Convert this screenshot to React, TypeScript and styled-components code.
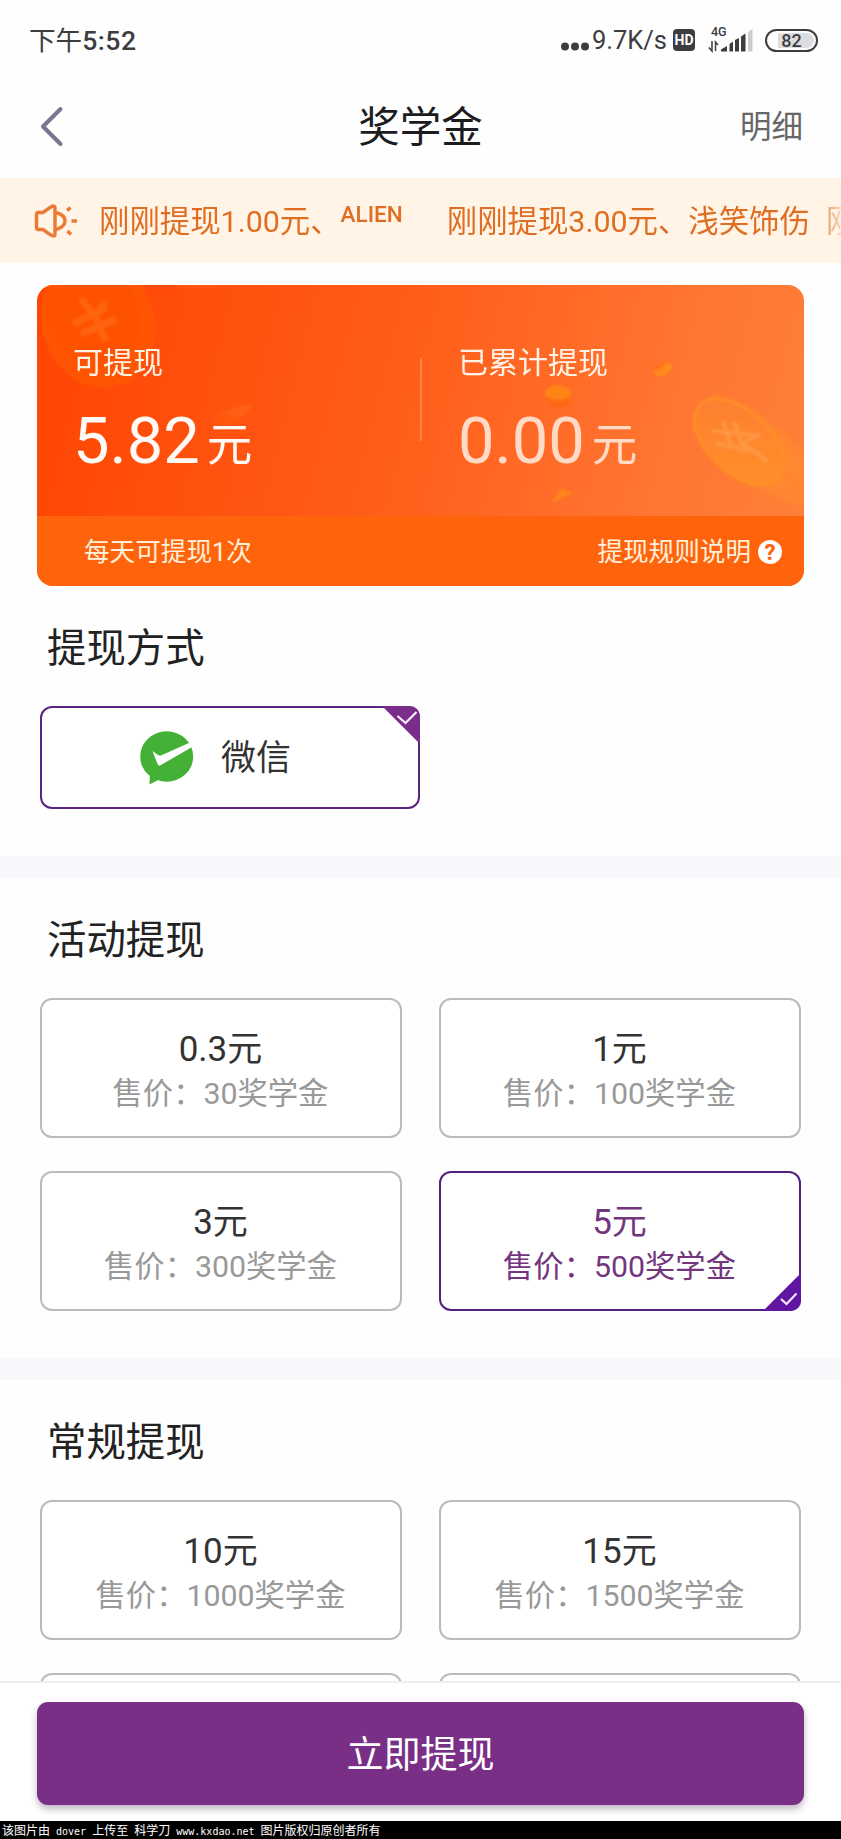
import React from "react";
import styled, { createGlobalStyle } from "styled-components";

const GlobalStyle = createGlobalStyle`
  * { box-sizing: border-box; }
  body {
    margin: 0;
    background: #fefefe;
    font-family: Roboto, "Noto Sans CJK SC", sans-serif;
    color: #222;
  }
`;

const Screen = styled.div`
  display: flex;
  flex-direction: column;
  width: 841px;
  height: 1839px;
  overflow: hidden;
  background: #fefefe;
`;

const StatusBar = styled.header`
  display: flex;
  flex: none;
  align-items: center;
  height: 80px;
  padding: 0 23px 0 29px;
  color: #3d3d3f;
  font-size: 26.6px;
  line-height: 30px;
`;

const Clock = styled.span`
  flex: 1;
  padding-top: 1px;

  b {
    font-weight: 500;
    letter-spacing: 0.5px;
  }
`;

const Speed = styled.span`
  margin-left: 3px;
  font-size: 25.5px;
`;

const HdBadge = styled.span`
  width: 22px;
  height: 22px;
  margin-left: 6px;
  border-radius: 4px;
  background: #3d3d3f;
  color: #fff;
  font-size: 14px;
  font-weight: 700;
  line-height: 23px;
  text-align: center;
`;

const Signal = styled.svg`
  margin: 0 12px 0 13px;
  overflow: visible;
`;

const Battery = styled.span`
  display: flex;
  width: 53px;
  height: 23px;
  padding: 2px 2px 2px 11px;
  border: 2px solid #3d3d3f;
  border-radius: 12px;
`;

const BatteryLevel = styled.span`
  flex: 1;
  padding-right: 9px;
  border-radius: 2px 8px 8px 2px;
  background: #dddde0;
  font-size: 18px;
  font-weight: 500;
  line-height: 16px;
  text-align: center;
`;

const NavBar = styled.nav`
  display: grid;
  flex: none;
  grid-template-columns: 1fr auto 1fr;
  align-items: center;
  height: 98px;
  padding: 0 38px 6px 39px;
`;

const PageTitle = styled.h1`
  margin: 0;
  padding: 3px 1px 0 0;
  color: #1c1c1e;
  font-size: 41.5px;
  font-weight: 400;
  line-height: 50px;
`;

const NavLink = styled.a`
  justify-self: end;
  padding-top: 4px;
  color: #666;
  font-size: 31.5px;
  line-height: 40px;
`;

const Ticker = styled.div`
  display: flex;
  flex: none;
  align-items: center;
  height: 85px;
  padding-left: 34px;
  background: #fff4e6;
  color: #df6e22;
`;

const TickerTrack = styled.div`
  display: flex;
  flex: 1;
  align-items: center;
  margin-left: 15px;
  padding-top: 2px;
  overflow: hidden;
  font-size: 30.4px;
  line-height: 44px;
  white-space: nowrap;
  mask-image: linear-gradient(90deg, #000 714px, transparent 750px);
`;

const TickerItem = styled.span`
  flex: none;
`;

const TickerName = styled.span`
  flex: none;
  margin: 0 44px 15px 0;
  font-size: 22.5px;
  font-weight: 500;
  line-height: 30px;
`;

const TickerNext = styled(TickerItem)`
  margin-left: 16px;
`;

const Scroll = styled.main`
  flex: 1;
  min-height: 0;
  overflow: hidden;
  padding-top: 22px;
`;

const BalanceCard = styled.section`
  position: relative;
  height: 301px;
  margin: 0 37px;
  border-radius: 16px;
  overflow: hidden;
  background: linear-gradient(104deg, #ff4604 4%, #ff5c18 44%, #ff7632 80%, #ff8139 100%);
  color: #fff3e8;
`;

const CardArt = styled.svg`
  position: absolute;
  inset: 0;
`;

const Balances = styled.div`
  position: relative;
  display: flex;
  height: 231px;
  padding: 58px 0 0 36px;
`;

const Balance = styled.div<{ $faded?: boolean }>`
  width: ${(p) => (p.$faded ? "auto" : "347px")};
  padding-left: ${(p) => (p.$faded ? "36px" : "0")};
`;

const BalanceRule = styled.div`
  width: 2px;
  height: 83px;
  margin-top: 15px;
  background: #ff8444;
`;

const BalanceLabel = styled.div`
  font-size: 30px;
  line-height: 40px;
`;

const BalanceValue = styled.div<{ $faded?: boolean }>`
  display: flex;
  align-items: baseline;
  gap: 7px;
  margin-top: 18px;
  color: ${(p) => (p.$faded ? "#ffdac6" : "#fffaf5")};
  font-size: 65px;
  line-height: 80px;

  small {
    font-size: 45.5px;
    line-height: 70px;
    transform: translateY(-2px);
  }
`;

const CardFooter = styled.div`
  position: relative;
  display: flex;
  align-items: center;
  justify-content: space-between;
  height: 70px;
  padding: 1px 22px 0 47px;
  background: #ff640d;
  color: #fff0dc;
  font-size: 25.6px;
  line-height: 34px;
`;

const RulesLink = styled.span`
  display: flex;
  align-items: center;
  gap: 7px;
`;

const HelpDot = styled.span`
  width: 24px;
  height: 24px;
  border-radius: 50%;
  background: #fff;
  color: #ff640d;
  font-size: 22px;
  font-weight: 800;
  line-height: 25px;
  text-align: center;
`;

const Section = styled.section<{ $divided?: boolean }>`
  padding: 0 40px 47px;
  border-top: ${(p) => (p.$divided ? "22px solid #f8f7fc" : "0")};
`;

const SectionTitle = styled.h2`
  margin: 0;
  padding: 34px 0 28px 7px;
  color: #222;
  font-size: 39.4px;
  font-weight: 400;
  line-height: 58px;
`;

const PayMethod = styled.button`
  position: relative;
  display: flex;
  align-items: center;
  width: 380px;
  height: 103px;
  padding: 0 0 0 98px;
  border: 2px solid #5b2382;
  border-radius: 12px;
  background: #fff;
  color: #333;
  font: inherit;
  font-size: 35px;
`;

const PayName = styled.span`
  margin-left: 27px;
  padding-top: 3px;
  line-height: 44px;
`;

const Corner = styled.svg<{ $at: "top" | "bottom" }>`
  position: absolute;
  right: -2px;
  ${(p) => p.$at}: -2px;
  border-radius: ${(p) => (p.$at === "top" ? "0 10px 0 0" : "0 0 10px 0")};
`;

const OptionGrid = styled.div`
  display: grid;
  grid-template-columns: 1fr 1fr;
  gap: 33px 37px;
`;

const OptionCard = styled.button<{ $selected?: boolean }>`
  position: relative;
  height: 140px;
  padding: 7px 1px 0 0;
  border: 2px solid ${(p) => (p.$selected ? "#55207f" : "#bbb")};
  border-radius: 12px;
  background: #fff;
  color: ${(p) => (p.$selected ? "#74357f" : "#999")};
  font: inherit;
  font-size: 30.3px;
  line-height: 44px;
  text-align: center;
`;

const Amount = styled.div<{ $selected?: boolean }>`
  color: ${(p) => (p.$selected ? "inherit" : "#333")};
  font-size: 35px;
`;

const ActionBar = styled.footer`
  flex: none;
  height: 140px;
  padding: 19px 37px 0;
  border-top: 2px solid #f0efe9;
  background: #fff;
`;

const SubmitButton = styled.button`
  display: block;
  width: 100%;
  height: 103px;
  padding: 4px 0 0;
  border: 0;
  border-radius: 11px;
  background: #7a2f87;
  box-shadow: 0 4px 7px rgba(60, 30, 70, 0.32);
  color: #fff;
  font: inherit;
  font-size: 37px;
  line-height: 50px;
`;

const Credit = styled.div`
  flex: none;
  height: 18px;
  padding-left: 2px;
  background: #000;
  color: #fff;
  font-family: "Noto Sans CJK SC", sans-serif;
  font-size: 12px;
  line-height: 18px;
  white-space: pre;

  span {
    font-family: "DejaVu Sans Mono", monospace;
    font-size: 10px;
  }
`;

const BackIcon = () => (
  <svg width="26" height="42" viewBox="0 0 26 42" fill="none" stroke="#77758f" strokeWidth="4" strokeLinecap="round" strokeLinejoin="round">
    <path d="M21.5 4 4 21.5 21.5 39" />
  </svg>
);

const SpeakerIcon = () => (
  <svg width="50" height="36" viewBox="0 0 50 36" fill="none" stroke="#ea7a34" strokeWidth="3.400" strokeLinejoin="round">
    <path d="M4.500 9.500H9L16.500 4.200Q21 1.500 21 5V31Q21 34.500 16.500 31.800L9 26.500H4.500Q2.500 26.500 2.500 24.500V11.500Q2.500 9.500 4.500 9.500Z" />
    <path d="M22 9.500Q31 12 31 18T22 26.500" />
    <path d="M33 7.500 36.500 4.500M37.500 18H43M33.500 28 37 31.500" />
  </svg>
);

const SignalIcon = () => (
  <Signal width="45" height="26" viewBox="0 0 45 26">
    <text x="3" y="9" fill="#3d3d3f" fontFamily="Roboto" fontSize="12.500" fontWeight="500">4G</text>
    <path d="M4 14V24L.8 20.500M7.500 24V15L10 18" fill="none" stroke="#3d3d3f" strokeWidth="1.500" />
    <path d="M13 24V22L19 18.500V24ZM21.500 24V16.500L25 14V24ZM27 24V12.500L31 10.500V24ZM33 24V9L37.500 6V24Z" fill="#3d3d3f" transform="translate(0 .5)" />
    <path d="M40 24.500V5L44.500 2V24.500Z" fill="#ccc" />
  </Signal>
);

const WechatIcon = () => (
  <svg width="54" height="54" viewBox="0 0 54 54">
    <ellipse cx="26.700" cy="25.500" rx="26.500" ry="25.200" fill="#44b035" />
    <path d="M10 42 9.500 53.500 20 48Z" fill="#44b035" />
    <path d="M12.500 20 18.500 24.200Q20 25 22 24L50 11.500 53 15.500 21 34Q18.500 35.500 17.500 33Z" fill="#fff" />
  </svg>
);

const CornerCheck = ({ at }: { at: "top" | "bottom" }) => (
  <Corner $at={at} width="38" height="38" viewBox="0 0 38 38">
    {at === "top" ? (
      <>
        <path d="M0 0H38V38Z" fill="#7b2d8c" />
        <path d="M15.500 10 23.500 17 34.500 6" fill="none" stroke="#fdeeff" strokeWidth="2.200" />
      </>
    ) : (
      <>
        <path d="M0 38H38V0Z" fill="#6016a0" />
        <path d="M18 26 23.500 31 33.500 20.500" fill="none" stroke="#f3e6ff" strokeWidth="2.200" />
      </>
    )}
  </Corner>
);

const CoinArt = () => (
  <CardArt width="767" height="231" viewBox="0 0 767 231" fill="none">
    <defs>
      <linearGradient id="edge" gradientUnits="userSpaceOnUse" x1="680" y1="140" x2="775" y2="200">
        <stop offset="0" stopColor="#ff9a20" stopOpacity=".5" />
        <stop offset="1" stopColor="#ff9428" stopOpacity=".35" />
      </linearGradient>
      <linearGradient id="face" gradientUnits="userSpaceOnUse" x1="665" y1="120" x2="735" y2="195">
        <stop offset="0" stopColor="#ff7e32" />
        <stop offset="1" stopColor="#ff9029" />
      </linearGradient>
      <linearGradient id="leaf" x1="0" y1="1" x2="1" y2="0">
        <stop offset="0" stopColor="#ff6a10" stopOpacity="0" />
        <stop offset="1" stopColor="#ff7018" stopOpacity=".6" />
      </linearGradient>
      <filter id="soft" x="-20%" y="-20%" width="140%" height="140%">
        <feGaussianBlur stdDeviation="3" />
      </filter>
      <filter id="faint" x="-20%" y="-20%" width="140%" height="140%">
        <feGaussianBlur stdDeviation="0.8" />
      </filter>
    </defs>
    <g filter="url(#faint)">
      <ellipse cx="61" cy="38" rx="56" ry="66" transform="rotate(-20 61 38)" fill="#ff5a08" opacity=".7" />
      <ellipse cx="58" cy="30" rx="44" ry="54" transform="rotate(-20 58 30)" fill="#ff5206" opacity=".9" />
      <path d="M44 14 58 32 69 56M68 17 58 32M36 39 70 22M44 49 79 34" stroke="#ff640c" strokeWidth="7" />
      <path d="M171 143Q178 122 216 120L204 134Q196 142 171 143Z" fill="url(#leaf)" />
      <path d="M136 0H188Q162 6 136 0Z" fill="#ff6414" opacity=".7" />
    </g>
    <path d="M672 111Q720 120 767 168V222Q735 210 700 193Z" fill="url(#edge)" filter="url(#soft)" />
    <g filter="url(#faint)">
      <ellipse cx="702" cy="157" rx="54" ry="31" transform="rotate(43 702 157)" fill="url(#face)" stroke="#ff9026" strokeWidth="2.500" />
      <path d="M676 146 723 151M679 158 714 166M686 136 695 164M697 137 708 168M723 149 705 158M705 158 731 176" stroke="#ff9a48" strokeWidth="4" opacity=".8" />
      <ellipse cx="521" cy="109" rx="13" ry="9" fill="#ff8416" />
      <path d="M508 111Q521 118 535 111Q533 123 520 123Q509 121 508 111Z" fill="#ff6614" opacity=".8" />
      <ellipse cx="626" cy="84" rx="10" ry="6" transform="rotate(-28 626 84)" fill="#ff8a1e" />
      <path d="M617 81 631 76Q627 82 618 86Z" fill="#ff7015" />
      <path d="M514 218 525 203 536 208Z" fill="#ff861a" />
    </g>
  </CardArt>
);

type Option = { amount: string; price: number; selected?: boolean };

const activityOptions: Option[] = [
  { amount: "0.3", price: 30 },
  { amount: "1", price: 100 },
  { amount: "3", price: 300 },
  { amount: "5", price: 500, selected: true },
];

const regularOptions: Option[] = [
  { amount: "10", price: 1000 },
  { amount: "15", price: 1500 },
];

const Options = ({ items, children }: { items: Option[]; children?: React.ReactNode }) => (
  <OptionGrid>
    {items.map((o) => (
      <OptionCard key={o.amount} $selected={o.selected}>
        <Amount $selected={o.selected}>{o.amount}元</Amount>
        <div>售价：{o.price}奖学金</div>
        {o.selected && <CornerCheck at="bottom" />}
      </OptionCard>
    ))}
    {children}
  </OptionGrid>
);

export default function App() {
  return (
    <Screen>
      <GlobalStyle />
      <StatusBar>
        <Clock>
          下午<b>5:52</b>
        </Clock>
        <svg width="28" height="22" viewBox="0 0 28 22" fill="#3d3d3f">
          <circle cx="4" cy="17.500" r="4" />
          <circle cx="14" cy="17.500" r="4" />
          <circle cx="24" cy="17.500" r="4" />
        </svg>
        <Speed>9.7K/s</Speed>
        <HdBadge>HD</HdBadge>
        <SignalIcon />
        <Battery>
          <BatteryLevel>82</BatteryLevel>
        </Battery>
      </StatusBar>
      <NavBar>
        <BackIcon />
        <PageTitle>奖学金</PageTitle>
        <NavLink>明细</NavLink>
      </NavBar>
      <Ticker>
        <SpeakerIcon />
        <TickerTrack>
          <TickerItem>刚刚提现1.00元、</TickerItem>
          <TickerName>ALIEN</TickerName>
          <TickerItem>刚刚提现3.00元、浅笑饰伤</TickerItem>
          <TickerNext>刚</TickerNext>
        </TickerTrack>
      </Ticker>
      <Scroll>
        <BalanceCard>
          <CoinArt />
          <Balances>
            <Balance>
              <BalanceLabel>可提现</BalanceLabel>
              <BalanceValue>5.82<small>元</small></BalanceValue>
            </Balance>
            <BalanceRule />
            <Balance $faded>
              <BalanceLabel>已累计提现</BalanceLabel>
              <BalanceValue $faded>0.00<small>元</small></BalanceValue>
            </Balance>
          </Balances>
          <CardFooter>
            <span>每天可提现1次</span>
            <RulesLink>
              提现规则说明<HelpDot>?</HelpDot>
            </RulesLink>
          </CardFooter>
        </BalanceCard>
        <Section>
          <SectionTitle>提现方式</SectionTitle>
          <PayMethod>
            <WechatIcon />
            <PayName>微信</PayName>
            <CornerCheck at="top" />
          </PayMethod>
        </Section>
        <Section $divided>
          <SectionTitle>活动提现</SectionTitle>
          <Options items={activityOptions} />
        </Section>
        <Section $divided>
          <SectionTitle>常规提现</SectionTitle>
          <Options items={regularOptions}>
            <OptionCard />
            <OptionCard />
          </Options>
        </Section>
      </Scroll>
      <ActionBar>
        <SubmitButton>立即提现</SubmitButton>
      </ActionBar>
      <Credit>
        该图片由<span> dover </span>上传至<span> </span>科学刀<span> www.kxdao.net </span>图片版权归原创者所有
      </Credit>
    </Screen>
  );
}
